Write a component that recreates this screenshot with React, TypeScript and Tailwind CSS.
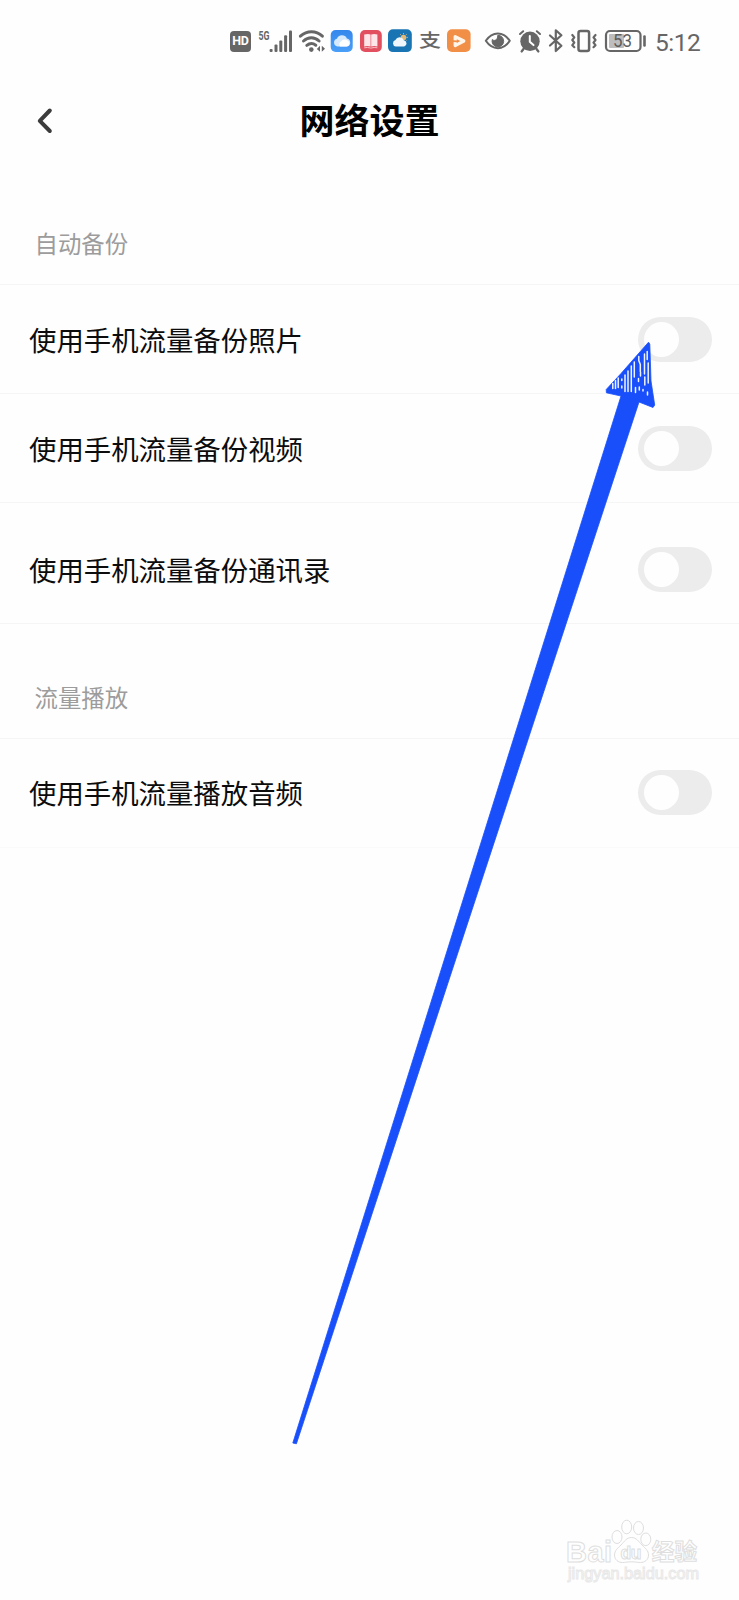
import { ReactNode } from 'react';

interface SettingRowProps {
  label: string;
  className?: string;
}

function Toggle() {
  return (
    <button
      role="switch"
      aria-checked={false}
      className="flex h-[45px] w-[74px] items-center rounded-full bg-[#ececec] pl-[5.5px]"
    >
      <span className="h-[35px] w-[35px] rounded-full bg-[#fefefe]" />
    </button>
  );
}

function SettingRow({ label, className = 'h-[109px] border-[#f5f5f5]' }: SettingRowProps) {
  return (
    <div className={`flex items-center justify-between border-b pr-[27px] pl-[29px] ${className}`}>
      <span className="pt-px text-[27.4px] leading-none text-[#0c0c0c]">{label}</span>
      <Toggle />
    </div>
  );
}

function SectionTitle({ children, className }: { children: ReactNode; className: string }) {
  return (
    <h2 className={`flex border-b border-[#f5f5f5] pl-[34.5px] text-[23.4px] leading-none text-[#9c9c9c] ${className}`}>
      {children}
    </h2>
  );
}

function StatusBar() {
  return (
    <div className="flex h-[82px] items-start pt-7 pl-[230px] text-[#666]">
      {/* HD */}
      <div className="mt-[3px] flex h-[21px] w-[21px] items-center justify-center rounded-[4px] bg-[#666] font-[Roboto] text-[12.5px] font-bold tracking-[-0.3px] text-white">
        HD
      </div>
      {/* 5G */}
      <svg className="ml-[7px] h-[26px] w-[35px]" viewBox="258 28 35 26" fill="currentColor">
        <text x="258.5" y="39.8" fontFamily="Roboto" fontWeight="700" fontSize="12.5" textLength="11" lengthAdjust="spacingAndGlyphs">5G</text>
        <rect x="269.6" y="49" width="3" height="3" rx="1" />
        <rect x="274.5" y="44.6" width="3" height="7.4" rx="1" />
        <rect x="279.3" y="40.4" width="3" height="11.6" rx="1" />
        <rect x="284.1" y="35.3" width="3" height="16.7" rx="1" />
        <rect x="289" y="30.4" width="3" height="21.6" rx="1" />
      </svg>
      {/* Wi-Fi */}
      <svg className="ml-[5px] h-[26px] w-[28px]" viewBox="298 28 28 26" fill="none" stroke="currentColor" strokeWidth="3" strokeLinecap="round">
        <path d="M300.4 36.2c6.6-6 15.6-6 22 0M303.5 41c4.7-4.2 11-4.2 15.6 0M306.8 45.4c2.9-2.4 6.2-2.4 9-.2" />
        <circle cx="311.3" cy="49.6" r="2.3" fill="currentColor" stroke="none" />
        <path d="M320 45.8v6l-3.2-2.800zM321.8 45.8v6l3.2-3z" fill="currentColor" stroke="none" />
      </svg>
      {/* Cloud drive */}
      <svg className="ml-[4px] h-[26px] w-[23px]" viewBox="330 28 23 26">
        <defs>
          <linearGradient id="cloud" x1="0" y1="0" x2="0" y2="1">
            <stop offset="0" stopColor="#3587ec" />
            <stop offset="1" stopColor="#4a9ff8" />
          </linearGradient>
        </defs>
        <rect x="330.7" y="30" width="22" height="22" rx="5" fill="url(#cloud)" />
        <path d="M337.5 46.5a4 4 0 0 1-.6-7.8 5.4 5.4 0 0 1 10-.2 4.1 4.1 0 0 1 .2 8z" fill="#d6e9fd" />
        <path d="M340 46.5a4 4 0 0 1 1.2-5.2 4.3 4.3 0 0 1 6.4-.8 3.2 3.2 0 0 1-.6 6z" fill="#fff" />
      </svg>
      {/* Reader */}
      <svg className="ml-[6px] h-[26px] w-[24px]" viewBox="359 28 24 26">
        <rect x="360" y="30" width="21.8" height="22" rx="5" fill="#e2505f" />
        <path d="M364.2 34.5q4-1 6.4 0v12q-3.4-1-6.4 0zM371.2 34.5q3-1 6.2 0v12q-3-1-6.2 0z" fill="#fde5e8" />
        <path d="M364.2 47.8q3.4-.8 6.7.3 3.3-1.1 6.5-.3" stroke="#f7bcc3" strokeWidth="1" fill="none" />
      </svg>
      {/* Weather */}
      <svg className="ml-[5px] h-[26px] w-[24px]" viewBox="388 28 24 26">
        <rect x="388" y="29.3" width="23.8" height="22.8" rx="5" fill="#1874b2" />
        <circle cx="403.5" cy="37.5" r="2.8" fill="#e0b878" />
        <path d="M403.5 33.2v1M406.6 34.3l-.8.8M407.8 37.4h-1.2M400.2 34.3l.8.8M406.6 40.5l-.8-.8" stroke="#d8b780" strokeWidth="1" />
        <path d="M395.8 46.6a3.4 3.4 0 0 1-.4-6.6 4.6 4.6 0 0 1 8.4.2 3.3 3.3 0 0 1 .4 6.4z" fill="#eef6fc" />
      </svg>
      {/* Alipay */}
      <div className="ml-[7px] flex h-[24px] w-[22px] scale-x-110 scale-y-90 items-center justify-center text-[20px] leading-none font-medium">
        支
      </div>
      {/* Video */}
      <svg className="ml-[6px] h-[26px] w-[24px]" viewBox="447 28 24 26" strokeLinecap="round" strokeLinejoin="round">
        <rect x="447" y="29.2" width="23.6" height="22.8" rx="5" fill="#f28f47" />
        <path d="M455.2 36.6l8.6 4.4-8.6 4.600z" fill="none" stroke="#fff5e8" strokeWidth="3.2" />
        <path d="M453.200 41.200l4 .2" stroke="#f28f47" strokeWidth="1.8" />
      </svg>
      {/* Eye comfort */}
      <svg className="ml-[13px] h-[26px] w-[28px]" viewBox="484 28 28 26" fill="none" stroke="currentColor">
        <path d="M485.8 40.8c6.6-9.8 17.6-9.8 24 0-6.4 9.8-17.4 9.8-24 0z" strokeWidth="2" strokeLinejoin="round" />
        <path d="M497.8 35.3a5.8 5.8 0 1 1-5.5 4.2c1.4 1.8 5.5 1.2 5.5-4.2z" fill="currentColor" strokeWidth="1" />
      </svg>
      {/* Alarm */}
      <svg className="ml-[6px] h-[26px] w-[24px]" viewBox="518 28 24 26" fill="none" stroke="currentColor" strokeLinecap="round">
        <circle cx="530" cy="41.3" r="9.7" fill="currentColor" stroke="none" />
        <path d="M520 34l3.2-2.8M540 34l-3.2-2.8" strokeWidth="2" />
        <path d="M523.5 49l-1.8 2.4M536.5 49l1.8 2.4" strokeWidth="2.4" />
        <path d="M529.8 36v5.8l3.7 3.3" stroke="#fefefe" strokeWidth="2" />
      </svg>
      {/* Bluetooth */}
      <svg className="ml-[6px] h-[26px] w-[16px]" viewBox="548 28 16 26" fill="none" stroke="currentColor" strokeWidth="2.2" strokeLinecap="round" strokeLinejoin="round">
        <path d="M550 35.5l11.4 10.2-5.6 5.3V30.3l5.6 5-11.4 10.2" />
      </svg>
      {/* Vibrate */}
      <svg className="ml-[6px] h-[26px] w-[28px]" viewBox="570 28 28 26" fill="none" stroke="currentColor" strokeWidth="2.2" strokeLinecap="round" strokeLinejoin="round">
        <rect x="578.5" y="31" width="10.6" height="20" rx="2" strokeWidth="2.5" />
        <path d="M572.3 35l2 2.4-2 2.6 2 2.6-2 2.6 2 2M595.5 35l-2 2.4 2 2.6-2 2.6 2 2.6-2 2" />
      </svg>
      {/* Battery */}
      <svg className="ml-[6px] h-[26px] w-[43px]" viewBox="604 28 43 26" fill="none">
        <rect x="606" y="31" width="34.5" height="20" rx="4" stroke="currentColor" strokeWidth="2.2" />
        <rect x="609" y="34" width="15" height="14" rx="1" fill="#bdbdbd" />
        <rect x="643.2" y="35.3" width="2.6" height="11.4" rx="1.2" fill="currentColor" />
        <text x="613" y="47.3" fill="#5e5e5e" fontFamily="Roboto" fontSize="17.5" textLength="19" lengthAdjust="spacingAndGlyphs">53</text>
      </svg>
      <span className="ml-[8px] font-[Roboto] text-[24.5px] leading-[29px] tracking-[-0.5px]">5:12</span>
    </div>
  );
}

function Arrow() {
  return (
    <svg className="pointer-events-none absolute top-0 left-0 h-[1600px] w-[739px]" viewBox="0 0 739 1600" fill="none">
      <path
        d="M648.5 342.2L649.8 344 651 381 654.7 405 653 407.5 639 402 296.4 1443.8 292.8 1443 621 396 606.4 392.8 606.2 389.5 621 373.5z"
        fill="#184ffb"
        stroke="#184ffb"
        strokeWidth="0.8"
        strokeLinejoin="round"
      />
      {/* Sketchy hatching in the head */}
      <path
        d="M612.8 383.5v5M615.5 380.5v8M618.2 378v9.5M621.8 379v1.5M621.8 386v2M625 375v16.5M628 371v20.5M631.3 366v25.5M634.3 362v15M635.5 387.5v5M638.8 356.5v4l1.5 4v7M644.5 354v20M644.8 377v8M647.2 351.5v8M648.2 363v20M638.5 378.5v3M640.5 372v4M639.3 387v3M643 389.5v1.5M647.5 392v3"
        stroke="#edf3ff"
        strokeWidth="1.5"
        strokeLinecap="round"
      />
    </svg>
  );
}

function Watermark() {
  return (
    <svg className="absolute top-[1515px] left-[560px] h-[75px] w-[145px]" viewBox="560 1515 145 75" fill="#fefefe" stroke="#dedede" strokeWidth="1">
      <g fontFamily="'Liberation Sans', sans-serif" fontWeight="700">
        <text x="566" y="1561.5" fontSize="29" textLength="46">Bai</text>
        <ellipse cx="617" cy="1537" rx="5" ry="6.5" />
        <ellipse cx="626.7" cy="1527" rx="5" ry="6.8" />
        <ellipse cx="638.5" cy="1528" rx="5" ry="6.5" />
        <ellipse cx="645.8" cy="1539.3" rx="5" ry="6.3" />
        <path d="M631.5 1537.5c5 0 7 4 10.5 7.5 3 3 6.500 5.500 6.500 10 0 5-4 7.500-8 7.500-3 0-5-.7-9-.7s-6 .7-9 .7c-4 0-8-2.500-8-7.500 0-4.500 3.500-7 6.500-10 3.500-3.500 5.500-7.500 10.500-7.500z" />
        <text x="620.5" y="1558.5" fontSize="17.5" textLength="21">du</text>
        <text x="651.8" y="1559.5" fontSize="22.7" fontFamily="'Noto Sans CJK SC', sans-serif">经验</text>
      </g>
      <text x="568" y="1579" fontSize="16.3" fontFamily="'Liberation Sans', sans-serif" textLength="131" stroke="#e8e8e8">
        jingyan.baidu.com
      </text>
    </svg>
  );
}

export default function App() {
  return (
    <div className="relative h-[1600px] w-[739px] overflow-hidden bg-[#fefefe] font-['Noto_Sans_CJK_SC',sans-serif]">
      <StatusBar />

      <header className="grid h-[78px] grid-cols-[1fr_auto_1fr] items-center pl-[36px]">
        <svg className="h-[28px] w-[18px]" viewBox="0 0 18 28" fill="none" stroke="#3c3c3c" strokeWidth="4" strokeLinecap="round" strokeLinejoin="round">
          <path d="M13.8 3.5L3.8 13.8l10 10.2" />
        </svg>
        <h1 className="-ml-[36px] pb-[6px] text-[35px] leading-none font-bold text-black">网络设置</h1>
      </header>

      <SectionTitle className="h-[125px] items-end pb-[29px]">自动备份</SectionTitle>
      <SettingRow label="使用手机流量备份照片" />
      <SettingRow label="使用手机流量备份视频" />
      <SettingRow label="使用手机流量备份通讯录" className="h-[121px] border-[#f5f5f5] pt-[12px]" />

      <SectionTitle className="h-[115px] items-end pb-[29px]">流量播放</SectionTitle>
      <SettingRow label="使用手机流量播放音频" className="h-[109px] border-[#fafafa] pb-px" />

      <Arrow />
      <Watermark />
    </div>
  );
}
